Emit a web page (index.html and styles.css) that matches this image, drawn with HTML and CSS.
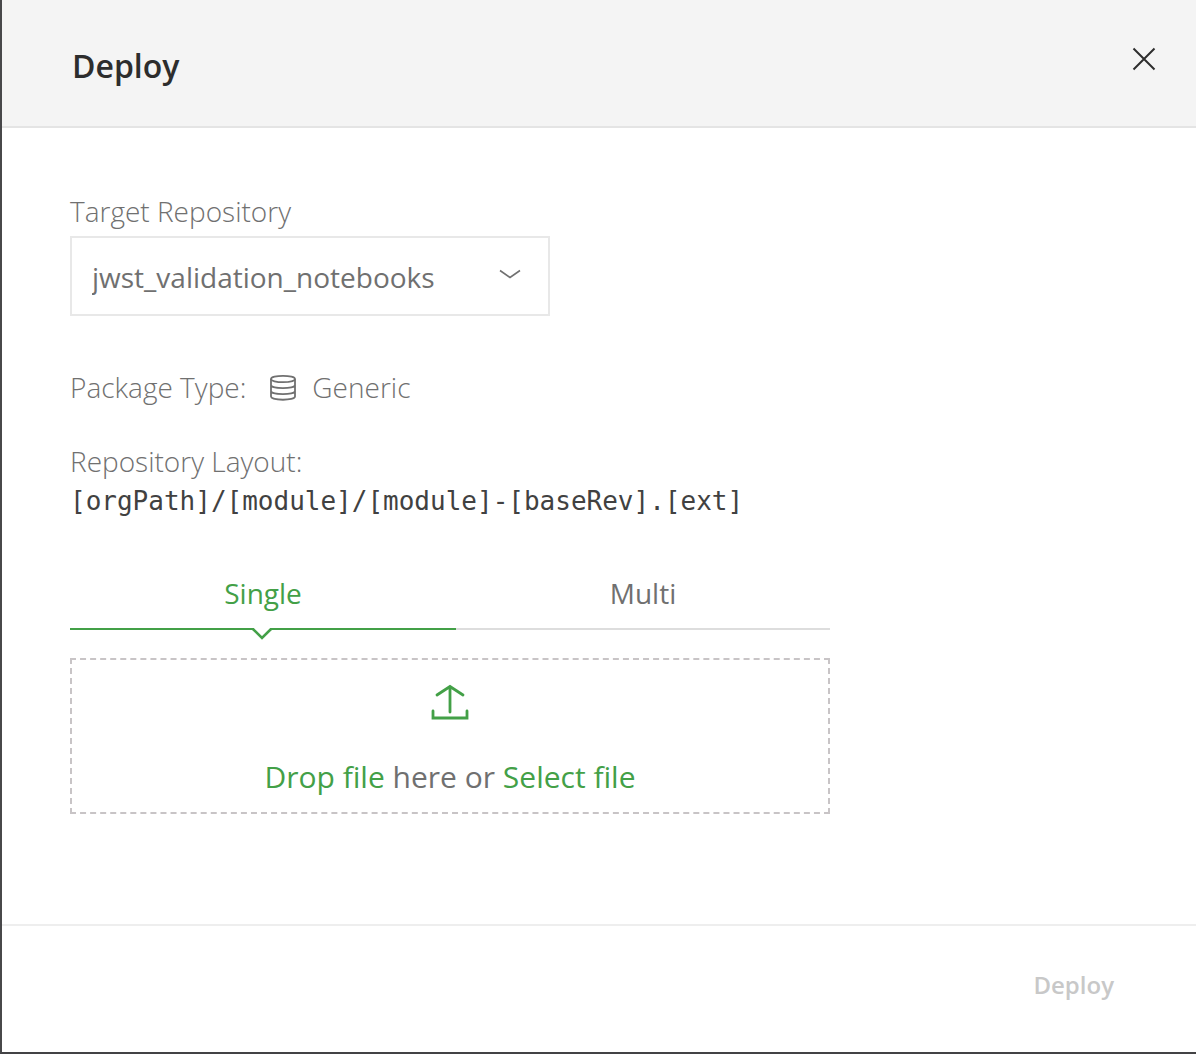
FILE: index.html
```html
<!DOCTYPE html>
<html lang="en">
<head>
<meta charset="utf-8">
<meta name="viewport" content="width=device-width, initial-scale=1">
<title>Deploy</title>
<link rel="stylesheet" href="styles.css">
</head>
<body>
<div class="dialog" role="dialog" aria-labelledby="dialog-title">
  <header class="dialog-header">
    <h1 class="dialog-title" id="dialog-title">Deploy</h1>
    <button class="close" type="button" aria-label="Close">
      <svg width="24" height="24" viewBox="0 0 24 24" fill="none" stroke="currentColor" stroke-width="2"><path d="M1.5 1.5 22.5 22.5M22.5 1.5 1.5 22.5"/></svg>
    </button>
  </header>
  <main class="dialog-body">
    <form class="form" id="deploy-form">
      <label class="label" for="repo">Target Repository</label>
      <div class="select-box">
        <select class="select" id="repo">
          <option>jwst_validation_notebooks</option>
        </select>
        <svg class="chevron" width="22" height="12" viewBox="0 0 22 12" fill="none" stroke="currentColor" stroke-width="1.6"><path d="M1 2.5 11 9.5 21 2.5"/></svg>
      </div>
      <div class="package">
        <span>Package Type:</span>
        <svg class="package-icon" width="26" height="28" viewBox="0 0 26 28" fill="none" stroke="currentColor" stroke-width="1.8">
          <ellipse cx="13" cy="6" rx="12" ry="3.2"/>
          <path d="M1 6V23.5C1 27.8 25 27.8 25 23.5V6M1 12C1 16.2 25 16.2 25 12M1 18C1 22.2 25 22.2 25 18"/>
        </svg>
        <span>Generic</span>
      </div>
      <div class="layout">
        <div>Repository Layout:</div>
        <code class="layout-path">[orgPath]/[module]/[module]-[baseRev].[ext]</code>
      </div>
      <div class="tabs" role="tablist">
        <button class="tab tab-active" type="button" role="tab" aria-selected="true">Single
          <svg class="tab-arrow" width="22" height="13" viewBox="0 0 22 13" fill="none"><path d="M2 0H20L11 10Z" fill="#fff"/><path d="M1 1H2L11 10 20 1H21" stroke="currentColor" stroke-width="2.6"/></svg>
        </button>
        <button class="tab" type="button" role="tab" aria-selected="false">Multi</button>
      </div>
      <div class="dropzone">
        <svg class="upload" width="40" height="40" viewBox="0 0 40 40" fill="none" stroke="currentColor" stroke-width="2.8" stroke-linecap="round"><path d="M20 30V5M7 13 20 4.5 33 13"/><path d="M3 29V36H37V29"/></svg>
        <div class="drop-text"><span class="green">Drop file</span> here or <a class="green" href="#select">Select file</a></div>
      </div>
    </form>
  </main>
  <footer class="dialog-footer">
    <button class="deploy" type="submit" form="deploy-form" disabled>Deploy</button>
  </footer>
</div>
</body>
</html>
```
FILE: styles.css
```css
* {
  box-sizing: border-box;
}

body {
  margin: 0;
  font-family: "Open Sans", sans-serif;
  font-size: 28px;
  font-weight: 300;
  line-height: 38px;
  color: #707070;
  background: #fff;
}

button,
select {
  font: inherit;
  color: inherit;
  background: none;
  border: 0;
  border-radius: 0;
  padding: 0;
  margin: 0;
}

svg {
  display: block;
}

.dialog {
  display: flex;
  flex-direction: column;
  min-height: 100vh;
  border-left: 2px solid #48484a;
  border-bottom: 2px solid #434345;
}

.dialog-header {
  display: flex;
  justify-content: space-between;
  align-items: flex-start;
  padding: 44px 40px 38px 70px;
  background: #f4f4f4;
  border-bottom: 2px solid #e4e4e4;
}

.dialog-title {
  margin: 0;
  font-size: 32px;
  font-weight: 600;
  line-height: 44px;
  color: #2d2d2d;
}

.close {
  margin-top: 3px;
  color: #2d2d2d;
}

.dialog-body {
  flex: 1;
  padding: 64px 68px;
}

.form {
  max-width: 760px;
}

.label {
  display: block;
  margin-bottom: 6px;
}

.select-box {
  position: relative;
  max-width: 480px;
}

.select {
  appearance: none;
  display: block;
  width: 100%;
  height: 80px;
  padding: 2px 60px 0 20px;
  border: 2px solid #e8e8e8;
  font-weight: 400;
}

.chevron {
  position: absolute;
  right: 29px;
  top: 32px;
  pointer-events: none;
}

.package {
  display: flex;
  align-items: center;
  margin-top: 52px;
}

.package-icon {
  margin: 0 16px 0 24px;
}

.layout {
  margin-top: 36px;
}

.layout-path {
  display: block;
  font-family: "DejaVu Sans Mono", monospace;
  font-size: 26px;
  font-weight: 400;
  line-height: 42px;
  color: #414141;
}

.tabs {
  display: grid;
  grid-template-columns: 193fr 187fr;
  margin-top: 52px;
}

.tab {
  position: relative;
  padding-bottom: 16px;
  border-bottom: 2px solid #ddd;
  font-weight: 400;
}

.tab-active {
  color: #43a047;
  border-color: #43a047;
}

.tab-arrow {
  position: absolute;
  left: calc(50% - 12px);
  bottom: -13px;
}

.dropzone {
  display: flex;
  flex-direction: column;
  align-items: center;
  gap: 34px;
  margin-top: 28px;
  padding: 22px 20px 14px;
  border: 2px dashed #c8c4c6;
  font-size: 30px;
  font-weight: 400;
  line-height: 42px;
}

.upload {
  color: #43a047;
}

.green {
  color: #43a047;
  text-decoration: none;
}

.dialog-footer {
  display: flex;
  justify-content: flex-end;
  padding: 42px 82px 50px;
  border-top: 2px solid #eee;
}

.deploy {
  font-size: 24px;
  font-weight: 600;
  line-height: 34px;
  color: #c8c8c8;
}
```
